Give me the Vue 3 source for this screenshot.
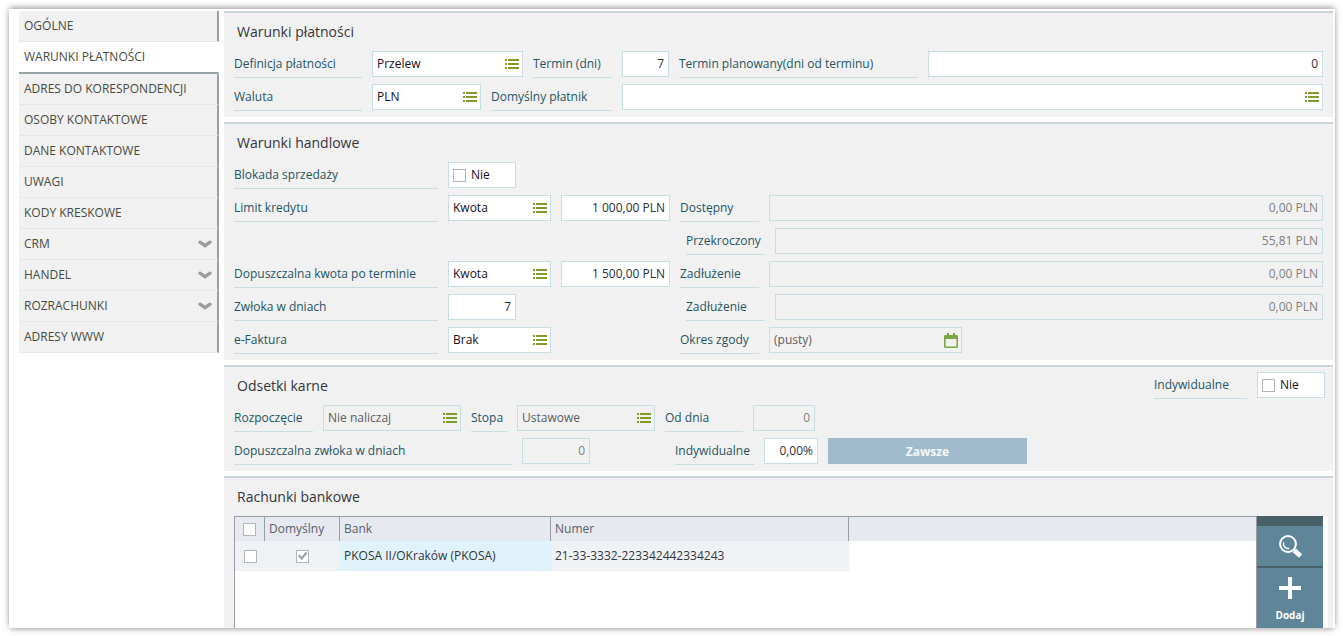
<script setup>
import { ref } from 'vue'

const menu = [
  { label: 'OGÓLNE' },
  { label: 'WARUNKI PŁATNOŚCI', active: true },
  { label: 'ADRES DO KORESPONDENCJI' },
  { label: 'OSOBY KONTAKTOWE' },
  { label: 'DANE KONTAKTOWE' },
  { label: 'UWAGI' },
  { label: 'KODY KRESKOWE' },
  { label: 'CRM', expandable: true },
  { label: 'HANDEL', expandable: true },
  { label: 'ROZRACHUNKI', expandable: true },
  { label: 'ADRESY WWW' },
]

const listIcon = 'M0 0h2v2H0zM3 0h11v2H3zM0 4h2v2H0zM3 4h11v2H3zM0 8h2v2H0zM3 8h11v2H3z'

const accounts = [
  { id: 1, primary: true, bank: 'PKOSA II/OKraków (PKOSA)', number: '21-33-3332-223342442334243' },
]

const form = ref({
  termDays: '7',
  plannedTerm: '0',
  creditLimit: '1 000,00 PLN',
  overdueLimit: '1 500,00 PLN',
  delayDays: '7',
  rate: '0,00%',
  salesBlocked: false,
  individual: false,
})
</script>

<template>
  <div class="page">
    <div class="window">
      <nav class="sidebar">
        <a v-for="item in menu" :key="item.label" href="#" class="nav-item" :class="{ active: item.active }">
          <span>{{ item.label }}</span>
          <svg v-if="item.expandable" class="chevron" viewBox="0 0 14 8" aria-hidden="true">
            <path d="M2 2.2 L7 5.6 L12 2.2" />
          </svg>
        </a>
      </nav>

      <main class="content">
        <section class="panel">
          <header class="panel-head"><h2>Warunki płatności</h2></header>
          <div class="rows">
            <div class="row">
              <label class="label w-main" for="payment">Definicja płatności</label>
              <div class="field w-payment">
                <select id="payment"><option>Przelew</option></select>
                <svg class="list" viewBox="0 0 14 10" aria-hidden="true"><path :d="listIcon" /></svg>
              </div>
              <label class="label w-short" for="term">Termin (dni)</label>
              <div class="field w-term"><input id="term" v-model="form.termDays" class="num" type="text" /></div>
              <label class="label w-planned" for="planned">Termin planowany(dni od terminu)</label>
              <div class="field grow"><input id="planned" v-model="form.plannedTerm" class="num" type="text" /></div>
            </div>
            <div class="row">
              <label class="label w-main" for="currency">Waluta</label>
              <div class="field w-amount">
                <select id="currency"><option>PLN</option></select>
                <svg class="list" viewBox="0 0 14 10" aria-hidden="true"><path :d="listIcon" /></svg>
              </div>
              <label class="label w-payer" for="payer">Domyślny płatnik</label>
              <div class="field grow">
                <select id="payer"><option></option></select>
                <svg class="list" viewBox="0 0 14 10" aria-hidden="true"><path :d="listIcon" /></svg>
              </div>
            </div>
          </div>
        </section>

        <section class="panel">
          <header class="panel-head"><h2>Warunki handlowe</h2></header>
          <div class="rows">
            <div class="trade-row">
              <label class="label" for="blocked">Blokada sprzedaży</label>
              <label class="field check w-check"><input id="blocked" v-model="form.salesBlocked" type="checkbox" />Nie</label>
            </div>
            <div class="trade-row">
              <label class="label" for="limit">Limit kredytu</label>
              <div class="field">
                <select id="limit"><option>Kwota</option></select>
                <svg class="list" viewBox="0 0 14 10" aria-hidden="true"><path :d="listIcon" /></svg>
              </div>
              <div class="field"><input v-model="form.creditLimit" class="num" type="text" aria-label="Limit kredytu – kwota" /></div>
              <div class="row pair">
                <label class="label w-short" for="available">Dostępny</label>
                <div class="field grow off"><input id="available" class="num" type="text" value="0,00 PLN" readonly /></div>
              </div>
            </div>
            <div class="trade-row">
              <div class="row pair nested">
                <label class="label w-short" for="exceeded">Przekroczony</label>
                <div class="field grow off"><input id="exceeded" class="num" type="text" value="55,81 PLN" readonly /></div>
              </div>
            </div>
            <div class="trade-row">
              <label class="label" for="overdue">Dopuszczalna kwota po terminie</label>
              <div class="field">
                <select id="overdue"><option>Kwota</option></select>
                <svg class="list" viewBox="0 0 14 10" aria-hidden="true"><path :d="listIcon" /></svg>
              </div>
              <div class="field"><input v-model="form.overdueLimit" class="num" type="text" aria-label="Dopuszczalna kwota" /></div>
              <div class="row pair">
                <label class="label w-short" for="debt">Zadłużenie</label>
                <div class="field grow off"><input id="debt" class="num" type="text" value="0,00 PLN" readonly /></div>
              </div>
            </div>
            <div class="trade-row">
              <label class="label" for="delay">Zwłoka w dniach</label>
              <div class="field w-check"><input id="delay" v-model="form.delayDays" class="num" type="text" /></div>
              <div class="row pair nested">
                <label class="label w-short" for="debt2">Zadłużenie</label>
                <div class="field grow off"><input id="debt2" class="num" type="text" value="0,00 PLN" readonly /></div>
              </div>
            </div>
            <div class="trade-row">
              <label class="label" for="einvoice">e-Faktura</label>
              <div class="field">
                <select id="einvoice"><option>Brak</option></select>
                <svg class="list" viewBox="0 0 14 10" aria-hidden="true"><path :d="listIcon" /></svg>
              </div>
              <div class="row pair">
                <label class="label w-short" for="consent">Okres zgody</label>
                <div class="field off w-date">
                  <input id="consent" type="text" value="(pusty)" readonly />
                  <svg class="calendar" viewBox="0 0 14 15" aria-hidden="true">
                    <path fill-rule="evenodd" d="M1 2h2V0h2v2h4V0h2v2h2l1 1v11l-1 1H1l-1-1V3zM1.6 6v7.4h10.8V6z" />
                  </svg>
                </div>
              </div>
            </div>
          </div>
        </section>

        <section class="panel">
          <header class="panel-head">
            <h2>Odsetki karne</h2>
            <div class="row">
              <label class="label w-individual" for="individual">Indywidualne</label>
              <label class="field check w-check"><input id="individual" v-model="form.individual" type="checkbox" />Nie</label>
            </div>
          </header>
          <div class="rows">
            <div class="row">
              <label class="label w-short" for="start">Rozpoczęcie</label>
              <div class="field off w-select">
                <select id="start"><option>Nie naliczaj</option></select>
                <svg class="list" viewBox="0 0 14 10" aria-hidden="true"><path :d="listIcon" /></svg>
              </div>
              <label class="label w-rate" for="rate-kind">Stopa</label>
              <div class="field off w-select">
                <select id="rate-kind"><option>Ustawowe</option></select>
                <svg class="list" viewBox="0 0 14 10" aria-hidden="true"><path :d="listIcon" /></svg>
              </div>
              <label class="label w-from" for="from-day">Od dnia</label>
              <div class="field off w-day"><input id="from-day" class="num" type="text" value="0" readonly /></div>
            </div>
            <div class="row">
              <label class="label w-delay" for="allowed-delay">Dopuszczalna zwłoka w dniach</label>
              <div class="field off w-check"><input id="allowed-delay" class="num" type="text" value="0" readonly /></div>
              <label class="label w-short apart" for="rate">Indywidualne</label>
              <div class="field w-percent"><input id="rate" v-model="form.rate" class="num" type="text" /></div>
              <button type="button" class="always">Zawsze</button>
            </div>
          </div>
        </section>

        <section class="panel accounts">
          <header class="panel-head"><h2>Rachunki bankowe</h2></header>
          <div class="grid-wrap">
            <div class="grid-area">
              <table>
                <colgroup>
                  <col class="c-select" /><col class="c-default" /><col class="c-bank" /><col class="c-number" /><col />
                </colgroup>
                <thead>
                  <tr>
                    <th class="center"><input type="checkbox" aria-label="Zaznacz wszystkie" /></th>
                    <th>Domyślny</th>
                    <th>Bank</th>
                    <th>Numer</th>
                    <th class="rest"></th>
                  </tr>
                </thead>
                <tbody>
                  <tr v-for="account in accounts" :key="account.id">
                    <td class="center"><input type="checkbox" aria-label="Zaznacz wiersz" /></td>
                    <td class="center"><input type="checkbox" :checked="account.primary" aria-label="Domyślny" /></td>
                    <td class="bank">{{ account.bank }}</td>
                    <td>{{ account.number }}</td>
                    <td class="rest"></td>
                  </tr>
                </tbody>
              </table>
            </div>
            <div class="tools">
              <button type="button" aria-label="Szukaj">
                <svg class="lens" viewBox="0 0 23 23" aria-hidden="true">
                  <circle cx="9" cy="9" r="7.9" />
                  <path class="glare" d="M4.6 7.4a4.8 4.8 0 0 0 5.6 6" />
                  <path class="handle" d="M15.2 15.4l6.4 5.6" />
                </svg>
              </button>
              <button type="button" class="add">
                <svg class="plus" viewBox="0 0 22 22" aria-hidden="true"><path d="M9 0h4v9h9v4h-9v9H9v-9H0V9h9z" /></svg>
                <span>Dodaj</span>
              </button>
            </div>
          </div>
        </section>
      </main>
    </div>
  </div>
</template>

<style>
body {
  background: #fff;
}
</style>

<style scoped>
.page {
  box-sizing: border-box;
  height: 100vh;
  padding: 9px 8px 8px 9px;
  overflow: hidden;
  background: #fff;
  color: #2b2b30;
  font-family: "Open Sans", "Noto Sans", sans-serif;
  font-size: 12px;
  line-height: 16px;
}

.page *,
.page *::before {
  box-sizing: border-box;
}

.window {
  display: flex;
  gap: 5px;
  height: 100%;
  padding: 2px 2px 0 10px;
  background: #fff;
  box-shadow: 0 0 8px rgba(0, 0, 0, 0.2), 0 -3px 5px -1px rgba(0, 0, 0, 0.24), 0 3px 5px -2px rgba(0, 0, 0, 0.24);
}

.sidebar {
  flex: 0 0 200px;
}

.nav-item {
  display: flex;
  align-items: center;
  justify-content: space-between;
  height: 31px;
  padding: 0 5px;
  border-right: 2px solid #98a3a7;
  border-bottom: 1px solid #e6e6e6;
  background: #f1f1f1;
  color: #474b41;
  text-decoration: none;
}

.nav-item.active {
  height: 32px;
  border-right-width: 0;
  border-bottom: 2px solid #98a3a7;
  border-bottom-right-radius: 2px;
  background: #fff;
}

.chevron {
  width: 14px;
  height: 8px;
  fill: none;
  stroke: #9b9b9b;
  stroke-width: 3.4;
  stroke-linecap: round;
}

.content {
  display: flex;
  flex: 1;
  flex-direction: column;
  gap: 5px;
  min-width: 0;
  overflow: hidden;
}

.panel {
  flex: none;
  border-top: 2px solid #c9d5d8;
  background: #f1f1f1;
}

.panel-head {
  display: flex;
  justify-content: space-between;
  height: 38px;
  padding: 5px 8px 0 13px;
}

h2 {
  margin: 0;
  color: #33363b;
  font-size: 14px;
  font-weight: 400;
  line-height: 27px;
}

.rows {
  display: flex;
  flex-direction: column;
  gap: 6px;
  padding: 0 10px 6px;
}

.row {
  display: flex;
  gap: 10px;
  height: 27px;
}

.trade-row {
  display: grid;
  grid-template-columns: 204px 103px 109px 1fr;
  gap: 10px;
  height: 27px;
}

.pair {
  grid-column: 4;
}

.nested {
  margin-left: 6px;
}

.label {
  flex: none;
  height: 27px;
  border-bottom: 1px solid #c5dfe5;
  color: #1f5563;
  line-height: 26px;
  white-space: nowrap;
}

.field {
  position: relative;
  flex: none;
  height: 26px;
  border: 1px solid #c5dfe5;
  background: #fff;
  color: #170f1b;
}

.field.off {
  background: transparent;
  color: #5c5c60;
}

.field.grow {
  flex: 1;
  min-width: 0;
}

.field select,
.field input[type="text"] {
  display: block;
  width: 100%;
  height: 24px;
  margin: 0;
  padding: 0 4px;
  border: 0;
  outline: 0;
  appearance: none;
  background: transparent;
  color: inherit;
  font: inherit;
}

.field input[type="text"] {
  padding-bottom: 2px;
}

.field input.num[type="text"] {
  color: #2d2d34;
  text-align: right;
}

.field.off input.num[type="text"] {
  color: #808084;
}

.check {
  display: flex;
  align-items: center;
  gap: 5px;
  padding-left: 4px;
}

.list {
  position: absolute;
  top: 7px;
  right: 3px;
  width: 14px;
  height: 10px;
  fill: #7d9c2c;
  pointer-events: none;
}

.calendar {
  position: absolute;
  top: 5px;
  right: 3px;
  width: 14px;
  height: 15px;
  fill: #7ba546;
  pointer-events: none;
}

input[type="checkbox"] {
  display: block;
  flex: none;
  width: 13px;
  height: 13px;
  margin: 0;
  border: 1px solid #b4b4b4;
  appearance: none;
  background: #fff;
}

input[type="checkbox"]:checked::before {
  display: block;
  width: 11px;
  height: 11px;
  background: #a3a3a3;
  clip-path: polygon(8% 50%, 24% 36%, 42% 56%, 78% 12%, 94% 24%, 44% 88%);
  content: "";
}

.w-main { width: 128px; }
.w-payment { width: 151px; }
.w-short { width: 79px; }
.w-term { width: 47px; }
.w-planned { width: 239px; }
.w-amount { width: 109px; }
.w-payer { width: 121px; }
.w-check { width: 68px; }
.w-date { width: 193px; }
.w-individual { width: 93px; }
.w-select { width: 138px; }
.w-rate { width: 36px; }
.w-from { width: 78px; }
.w-day { width: 62px; }
.w-delay { width: 278px; }
.w-percent { width: 54px; }

.apart {
  margin-left: 75px;
}

.always {
  width: 199px;
  height: 26px;
  padding: 2px 0 0;
  border: 0;
  background: #a0bbcc;
  color: #f3f7f9;
  font: inherit;
  font-weight: 700;
}

.accounts {
  display: flex;
  flex: 1 0 auto;
  flex-direction: column;
}

.grid-wrap {
  display: flex;
  flex: 1;
  margin: 0 5px 0 10px;
  padding-right: 5px;
  background: #fff;
}

.grid-area {
  flex: 1;
  border: 1px solid #979ca6;
  border-bottom: 0;
}

table {
  width: 100%;
  border-collapse: separate;
  border-spacing: 0;
  table-layout: fixed;
}

.c-select { width: 30px; }
.c-default { width: 75px; }
.c-bank { width: 211px; }
.c-number { width: 298px; }

th,
td {
  padding: 0 4px;
  text-align: left;
  white-space: nowrap;
}

th {
  height: 24px;
  border-right: 1px solid #979ca6;
  background: #e6e9ef;
  color: #5a6069;
  font-weight: 400;
}

td {
  height: 30px;
  background: #eff2f5;
  color: #33353a;
}

th.rest {
  border-right: 0;
}

td.rest {
  background: transparent;
}

td.bank {
  background: #e0f2fb;
}

.center input {
  margin: 0 auto;
}

.tools {
  display: flex;
  flex: 0 0 66px;
  flex-direction: column;
  border-top: 10px solid #4a6068;
  background: #5f8698;
}

.tools button {
  display: flex;
  flex-direction: column;
  align-items: center;
  justify-content: center;
  height: 42px;
  padding: 0;
  border: 0;
  border-bottom: 2px solid #4a6068;
  background: transparent;
  color: #fff;
  font: inherit;
  font-size: 10px;
  font-weight: 700;
}

.tools .add {
  justify-content: flex-start;
  gap: 8px;
  height: 60px;
  padding-top: 9px;
  border-bottom: 0;
}

.lens {
  width: 23px;
  height: 23px;
  fill: none;
  stroke: #fff;
  stroke-width: 2;
}

.lens .glare {
  stroke-width: 1.4;
}

.lens .handle {
  stroke-width: 4.8;
}

.plus {
  width: 22px;
  height: 22px;
  fill: #fff;
}
</style>
